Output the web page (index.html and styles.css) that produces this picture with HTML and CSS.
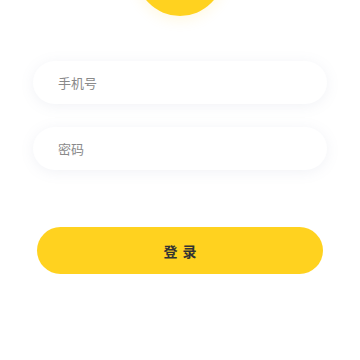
FILE: index.html
```html
<!DOCTYPE html>
<html lang="zh-CN">
<head>
  <meta charset="UTF-8">
  <meta name="viewport" content="width=device-width, initial-scale=1.0">
  <title>登录</title>
  <link rel="stylesheet" href="styles.css">
</head>
<body>
  <div class="logo"></div>
  <form class="login-form">
    <input class="field" type="tel" placeholder="手机号">
    <input class="field" type="password" placeholder="密码">
    <button class="login-btn" type="button">登录</button>
  </form>
</body>
</html>
```

FILE: styles.css
```css
body {
  margin: 0;
  background-color: #fff;
  font-family: "Noto Sans CJK SC", "Noto Sans", sans-serif;
  color: #333;
  overflow: hidden;
}
.logo {
  width: 88px;
  height: 88px;
  margin: -72px auto 0;
  border-radius: 50%;
  background-color: #ffd21f;
  box-shadow: 0 4px 14px rgba(255, 200, 0, 0.12);
}
.login-form {
  display: flex;
  flex-direction: column;
  margin-top: 45px;
  padding: 0 33px;
}
.field {
  height: 43px;
  margin-bottom: 23px;
  padding: 0 25px;
  border: none;
  border-radius: 22px;
  background-color: #fff;
  box-shadow: 0 2px 14px rgba(120, 130, 170, 0.1);
  font-family: inherit;
  font-size: 13px;
  color: #333;
  outline: none;
}
.field::placeholder {
  color: #8a8a8a;
}
.login-btn {
  height: 47px;
  margin: 34px 4px 0;
  border: none;
  border-radius: 24px;
  background-color: #ffd21f;
  font-family: inherit;
  font-size: 14px;
  font-weight: bold;
  letter-spacing: 5px;
  text-indent: 5px;
  color: #333;
  cursor: pointer;
}
```
